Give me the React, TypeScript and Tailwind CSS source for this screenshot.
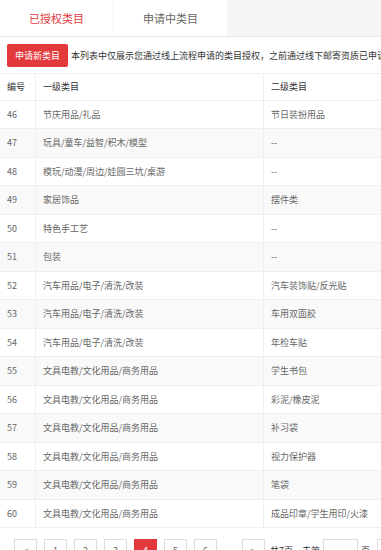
import React from 'react';

const ROWS: [number, string, string][] = [
  [46, '节庆用品/礼品', '节日装扮用品'],
  [47, '玩具/童车/益智/积木/模型', '--'],
  [48, '模玩/动漫/周边/娃圆三坑/桌游', '--'],
  [49, '家居饰品', '摆件类'],
  [50, '特色手工艺', '--'],
  [51, '包装', '--'],
  [52, '汽车用品/电子/清洗/改装', '汽车装饰贴/反光贴'],
  [53, '汽车用品/电子/清洗/改装', '车用双面胶'],
  [54, '汽车用品/电子/清洗/改装', '年检车贴'],
  [55, '文具电教/文化用品/商务用品', '学生书包'],
  [56, '文具电教/文化用品/商务用品', '彩泥/橡皮泥'],
  [57, '文具电教/文化用品/商务用品', '补习袋'],
  [58, '文具电教/文化用品/商务用品', '视力保护器'],
  [59, '文具电教/文化用品/商务用品', '笔袋'],
  [60, '文具电教/文化用品/商务用品', '成品印章/学生用印/火漆'],
];

const PAGES = ['<', '1', '2', '3', '4', '5', '6'];

export default function App() {
  return (
    <div
      className="w-[381px] h-[550px] overflow-hidden bg-white"
      style={{ fontFamily: '"Microsoft YaHei", "Noto Sans CJK SC", sans-serif' }}
    >
      {/* Tabs */}
      <div className="flex h-[37px] bg-[#f5f5f5] border-b border-[#e8e8e8]">
        <div className="w-[113px] h-[36px] bg-white flex items-center justify-center text-[11px] text-[#e4393c]">
          已授权类目
        </div>
        <div className="ml-px w-[113px] h-[36px] bg-white flex items-center justify-center text-[11px] text-[#666]">
          申请中类目
        </div>
      </div>

      <div className="w-[560px]">
        {/* Action row */}
        <div className="flex items-center mt-[7px] pl-[7px] h-[23px]">
          <button className="h-[23px] px-[8px] rounded-[2px] bg-[#e4393c] text-white text-[9px] leading-none whitespace-nowrap">
            申请新类目
          </button>
          <span className="ml-[3px] text-[9px] text-[#333] whitespace-nowrap">
            本列表中仅展示您通过线上流程申请的类目授权，之前通过线下邮寄资质已申请的类目不在此列表中展示
          </span>
        </div>

        {/* Table */}
        <div className="mt-[6px] text-[9px]">
          <div className="grid grid-cols-[35px_228px_1fr] h-[28px] border-y border-[#efefef] text-[#333]">
            <div className="flex items-center pl-[7px]">编号</div>
            <div className="flex items-center pl-[7px] border-l border-[#efefef]">一级类目</div>
            <div className="flex items-center pl-[7px] border-l border-[#efefef]">二级类目</div>
          </div>
          {ROWS.map(([id, first, second], i) => (
            <div
              key={id}
              className={`grid grid-cols-[35px_228px_1fr] h-[28.47px] border-b border-[#efefef] text-[#666] ${
                i % 2 === 1 ? 'bg-[#f9f9f9]' : 'bg-white'
              }`}
            >
              <div className="flex items-center pl-[7px]">{id}</div>
              <div className="flex items-center pl-[7px] border-l border-[#efefef] whitespace-nowrap">{first}</div>
              <div className="flex items-center pl-[7px] border-l border-[#efefef] whitespace-nowrap">{second}</div>
            </div>
          ))}
        </div>

        {/* Pagination */}
        <div className="flex items-center mt-[11px] pl-[14px] text-[9px] text-[#666]">
          {PAGES.map((p) => (
            <div
              key={p}
              className={`w-[23px] h-[23px] mr-[7px] flex items-center justify-center border ${
                p === '4' ? 'bg-[#e4393c] border-[#e4393c] text-white' : 'bg-white border-[#ddd]'
              }`}
            >
              {p}
            </div>
          ))}
          <span className="w-[18px] text-center">...</span>
          <div className="w-[23px] h-[23px] flex items-center justify-center border border-[#ddd] bg-white">
            {'>'}
          </div>
          <span className="ml-[5px] text-[#333]">共7页，去第</span>
          <div className="ml-[3px] w-[35px] h-[23px] border border-[#ddd] bg-white" />
          <span className="ml-[3px] text-[#333]">页</span>
          <div className="ml-[7px] w-[30px] h-[23px] flex items-center justify-center border border-[#ddd] bg-white">
            确定
          </div>
        </div>
      </div>
    </div>
  );
}
